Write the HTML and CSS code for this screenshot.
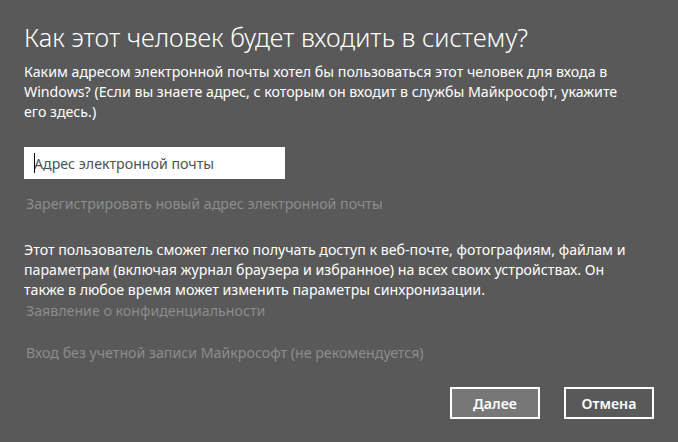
FILE: index.html
```html
<!DOCTYPE html>
<html lang="ru">
<head>
    <meta charset="UTF-8">
    <title>Учетная запись</title>
    <link rel="stylesheet" href="styles.css">
</head>
<body>
    <div class="dialog">
        <h1 class="title">Как этот человек будет входить в систему?</h1>
        <p class="text">Каким адресом электронной почты хотел бы пользоваться этот человек для входа в<br>Windows? (Если вы знаете адрес, с которым он входит в службы Майкрософт, укажите<br>его здесь.)</p>
        <div class="field">
            <input type="text" class="email" placeholder="Адрес электронной почты">
            <span class="caret"></span>
        </div>
        <a class="link link-register">Зарегистрировать новый адрес электронной почты</a>
        <p class="text text-sync">Этот пользователь сможет легко получать доступ к веб-почте, фотографиям, файлам и<br>параметрам (включая журнал браузера и избранное) на всех своих устройствах. Он<br>также в любое время может изменить параметры синхронизации.</p>
        <a class="link link-privacy">Заявление о конфиденциальности</a>
        <a class="link link-local">Вход без учетной записи Майкрософт (не рекомендуется)</a>
        <div class="buttons">
            <button class="btn btn-primary">Далее</button>
            <button class="btn">Отмена</button>
        </div>
    </div>
</body>
</html>
```

FILE: styles.css
```css
body {
    margin: 0;
    background-color: #595959;
    color: #fff;
    font-family: "Noto Sans", sans-serif;
    font-size: 14.2px;
}

.dialog {
    display: flex;
    flex-direction: column;
    align-items: flex-start;
    width: 630px;
    padding: 20px 24px 0;
}

.title {
    margin: 0 0 8px;
    font-size: 25.3px;
    font-weight: 300;
    line-height: 34px;
}

.text {
    margin: 0;
    line-height: 20px;
}

.field {
    position: relative;
    margin-top: 25px;
}

.email {
    display: block;
    width: 261px;
    height: 32px;
    box-sizing: border-box;
    padding: 0 10px;
    border: none;
    outline: none;
    background-color: #fff;
    color: #333;
    font-family: inherit;
    font-size: 14.2px;
}

.email::placeholder {
    color: #505050;
    opacity: 1;
}

.caret {
    position: absolute;
    left: 10px;
    top: 6px;
    width: 1px;
    height: 20px;
    background-color: #000;
}

.link {
    margin-left: 2px;
    color: #8c8c8c;
    line-height: 20px;
}

.link-register {
    margin-top: 15px;
}

.text-sync {
    margin-top: 26px;
}

.link-privacy {
    margin-top: 1px;
}

.link-local {
    margin-top: 22px;
}

.buttons {
    display: flex;
    align-self: flex-end;
    gap: 24px;
    margin-top: 24px;
}

.btn {
    width: 90px;
    height: 32px;
    padding: 0;
    border: 2px solid #fff;
    background-color: #595959;
    color: #fff;
    font-family: inherit;
    font-size: 14.2px;
    font-weight: 600;
}

.btn-primary {
    background-color: #777;
}
```
